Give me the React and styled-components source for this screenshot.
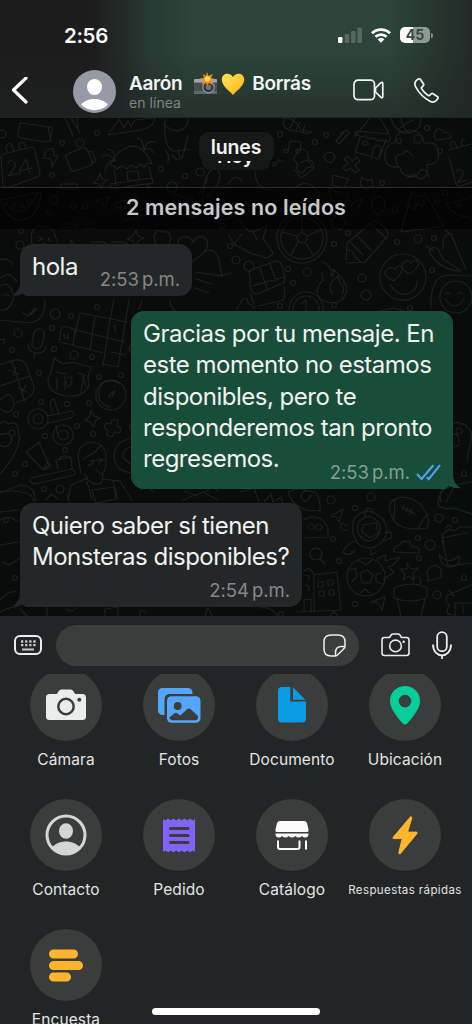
import React from "react";
import styled, { createGlobalStyle } from "styled-components";

const colors = {
  panel: "#222526",
  circle: "#3b3c3c",
  received: "#232728",
  sent: "#174d39",
  white: "#fafafa",
  text: "#f1f2f2",
  muted: "#858888",
  amber: "#ffb52e",
};

const GlobalStyle = createGlobalStyle`
  * {
    box-sizing: border-box;
  }

  body {
    margin: 0;
    background: #0a0b0b;
    font-family: Inter, "Liberation Sans", sans-serif;
    overflow: hidden;
  }

  svg {
    display: block;
    flex: none;
  }
`;

const Screen = styled.div`
  position: relative;
  display: flex;
  flex-direction: column;
  width: 472px;
  height: 1024px;
  overflow: hidden;
  background: ${colors.panel};
`;

const Header = styled.header`
  height: 118px;
  flex: none;
  border-bottom: 1px solid #1d2523;
  background:
    linear-gradient(180deg, transparent 45%, rgba(30, 36, 34, 0.55) 100%),
    linear-gradient(90deg, #1c1c1c 0 94px, #1f2323 102px, #222926 122px, #283a33 150px, #2c4439 190px, #2c4439 390px, #26382f 430px, #222a27 472px);
`;

const StatusBar = styled.div`
  display: flex;
  align-items: center;
  height: 70px;
  padding: 0 39px 0 64px;
`;

const Clock = styled.time`
  flex: 1;
  color: ${colors.white};
  font-size: 20.5px;
  font-weight: 600;
  letter-spacing: -0.35px;
`;

const Indicators = styled.div`
  display: flex;
  align-items: center;
  gap: 9px;
`;

const ContactBar = styled.div`
  display: flex;
  align-items: center;
  height: 44px;
  padding-left: 11px;
`;

const Contact = styled.div`
  flex: 1;
  padding-left: 13px;
`;

const ContactName = styled.h1`
  display: flex;
  align-items: center;
  height: 22px;
  margin: 0;
  padding-bottom: 2px;
  color: ${colors.text};
  font-size: 19px;
  font-weight: 600;
  letter-spacing: -0.35px;
`;

const Emojis = styled.span`
  display: flex;
  align-items: center;
  gap: 3px;
  margin: 0 7px 0 11px;
`;

const Presence = styled.div`
  color: #7c8682;
  font-size: 14px;
  line-height: 16px;
  letter-spacing: 0.05px;
  margin-top: -1px;
`;

const CallActions = styled.div`
  display: flex;
  align-items: center;
  gap: 29px;
  padding: 0 33px 4px 0;
`;

const Chat = styled.main`
  position: relative;
  display: flex;
  flex-direction: column;
  height: 498px;
  flex: none;
  overflow: hidden;
  background: #0a0b0b;
`;

const Wallpaper = styled.svg`
  position: absolute;
  inset: 0;
`;

const DateArea = styled.div`
  position: relative;
  display: flex;
  justify-content: center;
  height: 69px;
  flex: none;
  padding-top: 14px;
`;

const DatePill = styled.div`
  position: relative;
  width: 75px;
  height: 31px;
  border-radius: 10px;
  background: #151918;
  color: ${colors.text};
  font-size: 19.5px;
  font-weight: 600;
  line-height: 31px;
  letter-spacing: -0.1px;
  text-align: center;
`;

const TodayPill = styled.div`
  position: absolute;
  top: 29px;
  left: 2px;
  width: 70px;
  height: 9px;
  padding-bottom: 4px;
  overflow: hidden;
  border-radius: 0 0 9px 9px;
  background: #131716;
  display: flex;
  justify-content: center;
  align-items: flex-end;
  line-height: 20px;
`;

const UnreadBand = styled.div`
  position: relative;
  height: 42px;
  flex: none;
  border-top: 1px solid #292c2c;
  background: rgba(0, 0, 0, 0.58);
  color: #c7c9c9;
  font-size: 21.5px;
  font-weight: 600;
  line-height: 38px;
  text-align: center;
  letter-spacing: 0.12px;
`;

const Messages = styled.div`
  position: relative;
  display: flex;
  flex: none;
  flex-direction: column;
  align-items: flex-start;
  padding: 15px 19px 0 20px;
`;

const Bubble = styled.article`
  position: relative;
  align-self: ${({ $sent }) => ($sent ? "flex-end" : "flex-start")};
  width: ${({ $width }) => $width}px;
  height: ${({ $height }) => $height}px;
  margin-bottom: ${({ $sent }) => ($sent ? 14 : 15)}px;
  padding: 7px 0 0 12px;
  border-radius: 13px;
  background: ${({ $sent }) => ($sent ? colors.sent : colors.received)};
`;

const Line = styled.p`
  margin: 0;
  height: 31.3px;
  color: ${colors.text};
  font-size: 24px;
  line-height: 31.3px;
  letter-spacing: -0.5px;
  white-space: nowrap;
`;

const Meta = styled.span`
  position: absolute;
  right: 12px;
  bottom: 5px;
  display: flex;
  align-items: center;
  gap: 6px;
  color: ${({ $sent }) => ($sent ? "#80a094" : colors.muted)};
  font-size: 18.5px;
  line-height: 24px;
  letter-spacing: -0.05px;
  white-space: nowrap;
  word-spacing: -2px;
`;

const Tail = styled.svg`
  position: absolute;
  bottom: 0;
  ${({ $sent }) => ($sent ? "right: -8px;" : "left: -7px;")}
`;

const InputBar = styled.div`
  display: flex;
  align-items: center;
  height: 58px;
  flex: none;
  padding: 0 20px 0 14px;
`;

const Field = styled.div`
  display: flex;
  align-items: center;
  justify-content: flex-end;
  width: 303px;
  height: 41px;
  margin: 0 22px 0 14px;
  padding-right: 13px;
  border-radius: 21px;
  background: ${colors.circle};
`;

const InputActions = styled.div`
  display: flex;
  align-items: center;
  gap: 22px;
`;

const AttachmentPanel = styled.section`
  display: grid;
  grid-template-columns: repeat(4, 113px);
  grid-auto-rows: 130px;
  flex: 1;
  overflow: hidden;
  padding-left: 9.5px;
  align-content: start;
`;

const Attachment = styled.div`
  display: flex;
  flex-direction: column;
  align-items: center;
  margin-top: -5px;
`;

const IconCircle = styled.div`
  display: flex;
  align-items: center;
  justify-content: center;
  width: 72px;
  height: 72px;
  flex: none;
  border-radius: 50%;
  background: ${colors.circle};
`;

const Label = styled.span`
  margin-top: 9px;
  color: #e3e4e4;
  font-size: ${({ $small }) => ($small ? "11.5px" : "15.5px")};
  line-height: 20px;
  letter-spacing: ${({ $small }) => ($small ? "0.4px" : "0.1px")};
  white-space: nowrap;
`;

const HomeIndicator = styled.div`
  position: absolute;
  left: 152px;
  bottom: 9px;
  width: 168px;
  height: 7px;
  border-radius: 4px;
  background: #fff;
`;

const SignalIcon = () => (
  <svg width="24" height="16" viewBox="0 0 24 16">
    <rect x="0" y="10" width="4.5" height="6" rx="1.2" fill="#fff" />
    <g fill="#57695f">
      <rect x="6.7" y="7" width="4.5" height="9" rx="1.2" />
      <rect x="13.1" y="4" width="4.5" height="12" rx="1.2" />
      <rect x="19.4" y="0.5" width="4.5" height="15.5" rx="1.2" />
    </g>
  </svg>
);

const WifiIcon = () => (
  <svg width="20" height="15" viewBox="0 0 20 15">
    <g fill="none" stroke="#fff" strokeWidth="2.7">
      <path d="M1 5.2C6 .3 14 .3 19 5.2" />
      <path d="M4.4 8.8c3.2-3 8-3 11.2 0" />
    </g>
    <path d="M6.6 11.2c2-1.7 4.8-1.7 6.8 0L10 14.8z" fill="#fff" />
  </svg>
);

const BatteryShell = styled.div`
  display: flex;
  align-items: center;

  &::after {
    content: "";
    width: 2px;
    height: 5px;
    margin-left: 1px;
    border-radius: 0 2px 2px 0;
    background: #84918b;
  }
`;

const BatteryLevel = styled.div`
  width: 30px;
  height: 16px;
  border-radius: 5px;
  background: linear-gradient(90deg, #fff 45%, #8f9a94 45%);
  color: #344a40;
  font-size: 14px;
  font-weight: 700;
  line-height: 16.5px;
  text-align: center;
`;

const BackIcon = () => (
  <svg width="18" height="30" viewBox="0 0 18 30">
    <path d="M15 1 2.500 13 15 25" fill="none" stroke="#fff" strokeWidth="3.200" strokeLinecap="round" strokeLinejoin="round" />
  </svg>
);

const AvatarIcon = styled.svg`
  margin: -2px 0 0 44px;
`;

const CameraEmoji = () => (
  <svg width="25" height="24" viewBox="0 0 25 24">
    <path d="M1 8q0-1 1-1h3l1-1h5l1 1h11q1 0 1 1v13q0 1-1 1H2q-1 0-1-1z" fill="#4b4e50" />
    <path d="M1 8q0-1 1-1h21q1 0 1 1v2.5H1z" fill="#a1a6a7" />
    <path d="M1 19h23v2q0 1-1 1H2q-1 0-1-1z" fill="#636768" />
    <circle cx="15.5" cy="15.2" r="6.2" fill="#92979a" />
    <circle cx="15.5" cy="15.2" r="5" fill="#303437" />
    <circle cx="15.5" cy="15.2" r="2.8" fill="#65727c" />
    <path d="m14 0 1.5 4L20 2l-2 4 4 1-3.6 2 1.6 4-4-2-2 3-1-3.5L8.5 12l2-3.7L7 6.5 11 6 10 2l3 2z" fill="#f58b20" />
    <circle cx="14.5" cy="7" r="2.7" fill="#ffe14d" />
  </svg>
);

const HeartEmoji = () => (
  <svg width="24" height="24" viewBox="0 0 24 24">
    <defs>
      <linearGradient id="heart" x1="0" y1="0" x2="1" y2="1">
        <stop offset="0" stopColor="#ffe35d" />
        <stop offset=".65" stopColor="#fdc52f" />
        <stop offset="1" stopColor="#e99c16" />
      </linearGradient>
    </defs>
    <path d="M12 5.3C9.9.3 1 .3.8 7.6c0 6.4 7.2 11 11.2 15.4C16 18.6 23.2 14 23.2 7.6 23 .3 14.1.3 12 5.3z" fill="url(#heart)" />
  </svg>
);

const VideoIcon = () => (
  <svg width="32" height="22" viewBox="0 0 32 22" fill="none" stroke="#f2f3f3" strokeWidth="1.7" strokeLinejoin="round">
    <rect x="1" y="1.2" width="20.5" height="19.5" rx="4" />
    <path d="m22.5 9 5.300-5.200q2-1.300 2 .6v13.200q0 1.900-2 .6L22.5 13z" />
  </svg>
);

const PhoneIcon = () => (
  <svg width="25" height="25" viewBox="0 0 25 25" fill="none" stroke="#f2f3f3" strokeWidth="1.7" strokeLinejoin="round">
    <path d="M2.7 2.1 4.4 1c.8-.5 1.6-.2 2.1.5l2.9 4.3c.5.8.3 1.5-.3 2.1L7.7 9.4c-.4.4-.4.9-.1 1.4 1.7 2.7 3.900 5 6.600 6.600.5.3 1 .3 1.400-.1l1.500-1.400c.6-.6 1.300-.7 2-.2l4.200 2.800c.8.5.9 1.300.5 2l-1.300 1.800c-1.400 1.700-4 2.200-6.500.9C10 20.200 5 15.100 1.800 9.200.4 6.500.7 3.700 2.700 2.100z" />
  </svg>
);

const CheckIcon = () => (
  <svg width="25" height="17" viewBox="0 0 25 17" fill="none" stroke="#4ea3f5" strokeWidth="2.1">
    <path d="m1 10 4.600 5L17.300 1.200M10.800 13.200l1.900 1.900L24 1.200" />
  </svg>
);

const KeyboardIcon = () => (
  <svg width="28" height="20" viewBox="0 0 28 20">
    <rect x="1" y="1" width="26" height="18" rx="5" fill="none" stroke="#eceeee" strokeWidth="2" />
    <g stroke="#c9caca" strokeWidth="2.3" strokeDasharray="2.3 1.8">
      <path d="M7 6.500h15M7 10.200h15" />
    </g>
    <path d="M8 14.500h12" stroke="#c9caca" strokeWidth="2" />
  </svg>
);

const StickerIcon = () => (
  <svg width="23" height="23" viewBox="0 0 23 23" fill="none" stroke="#eceeee" strokeWidth="1.5" strokeLinejoin="round">
    <path d="M12.500 22H8q-7 0-7-7V8q0-7 7-7h7q7 0 7 7v4.500q0 1-1.500 2.500L15 20.500q-1.500 1.500-2.500 1.500z" />
    <path d="M12.500 22v-3.500q0-6 6-6H22" />
  </svg>
);

const CameraOutline = () => (
  <svg width="29" height="24" viewBox="0 0 29 24" fill="none" stroke="#eceeee" strokeWidth="1.6" strokeLinejoin="round">
    <path d="M3.500 4.500h5l1.700-2.600q.6-.9 1.600-.9h5.400q1 0 1.600.9l1.700 2.600h5q2.500 0 2.500 2.500v13q0 2.500-2.500 2.500h-22Q1 22.500 1 20V7q0-2.500 2.500-2.500z" />
    <circle cx="14.5" cy="12.9" r="5.8" />
    <circle cx="22.7" cy="8.8" r="1.3" fill="#eceeee" stroke="none" />
  </svg>
);

const MicIcon = () => (
  <svg width="20" height="29" viewBox="0 0 20 29" fill="none" stroke="#eceeee" strokeWidth="1.8">
    <rect x="5.2" y="1.2" width="9.6" height="19" rx="4.8" />
    <path d="M1 13.500c0 14.500 18 14.500 18 0M10 24.200V28" />
  </svg>
);

const CameraSolid = () => (
  <svg width="40" height="32" viewBox="0 0 40 32">
    <path d="M3.500 5h7.300l2-3q.9-1.500 2.600-1.500h9.200q1.700 0 2.600 1.500l2 3h7.300Q40 5 40 8.500v19q0 3.500-3.500 3.500h-33Q0 31 0 27.500v-19Q0 5 3.500 5z" fill="#ebecec" />
    <circle cx="20" cy="17.5" r="7.7" fill="none" stroke={colors.circle} strokeWidth="2.5" />
    <circle cx="33.3" cy="10.8" r="2" fill={colors.circle} />
  </svg>
);

const PhotosIcon = () => (
  <svg width="43" height="35" viewBox="0 0 43 35">
    <rect width="34.5" height="27" rx="4.5" fill="#53a6fb" />
    <rect x="6.5" y="6" width="36.5" height="30" rx="5" fill={colors.circle} />
    <rect x="9" y="8.3" width="33.5" height="26.5" rx="4.5" fill="#53a6fb" />
    <circle cx="19.7" cy="18" r="3.9" fill={colors.circle} />
    <path d="m11.500 29.200 5-4q1.400-1 2.700 0l3 2.300 7-6.300q1.800-1.500 3.500.1l7.300 6.700v1.500q0 2.800-3 2.800H14.500q-2.600 0-3-3.100z" fill={colors.circle} />
  </svg>
);

const DocumentIcon = () => (
  <svg width="28" height="36" viewBox="0 0 28 36" fill="#0b9be3">
    <path d="M4 0h8.300v14.500H28V31.500q0 4-4 4H4q-4 0-4-4V4q0-4 4-4z" />
    <path d="m15 .3 12.400 12.400H15z" />
  </svg>
);

const PinIcon = () => (
  <svg width="30" height="39" viewBox="0 0 30 39">
    <path d="M15 0c8.300 0 15 6.500 15 15 0 7.300-6.600 15.500-12.600 22.300q-2.400 2.500-4.800 0C6.600 30.500 0 22.300 0 15 0 6.500 6.700 0 15 0zm0 8.800a6.300 6.300 0 1 0 0 12.600 6.300 6.300 0 0 0 0-12.600z" fill="#08ce9b" />
  </svg>
);

const PersonIcon = () => (
  <svg width="42" height="42" viewBox="0 0 42 42">
    <circle cx="21" cy="21" r="19" fill="none" stroke="#d4d5d6" strokeWidth="3" />
    <ellipse cx="21" cy="17" rx="7" ry="7.7" fill="#d4d5d6" />
    <path d="M7 33.500c6.500-8 21.500-8 28 0C28 42.500 14 42.500 7 33.500z" fill="#d4d5d6" />
  </svg>
);

const OrderIcon = () => (
  <svg width="32" height="35" viewBox="0 0 32 35">
    <path d="M0 1l2.500 1.500L5 .5l2.700 2L10.500.5l2.700 2L16 .5l2.700 2 2.800-2 2.700 2L27 .5l2.500 2L32 1v33l-2.500-1.500-2.500 2-2.800-2-2.700 2-2.800-2-2.700 2-2.800-2-2.700 2-2.800-2-2.700 2-2.500-2L0 34z" fill="#8064fa" />
    <path d="M7.500 10.500h17.500M7.500 17.500h17.500M7.500 24.500h17.500" stroke={colors.circle} strokeWidth="3.2" strokeLinecap="round" />
  </svg>
);

const StoreIcon = () => (
  <svg width="34" height="29" viewBox="0 0 34 29" fill="#fbfbfb">
    <path d="M5 0h24q2.300 0 3 2l1.600 7q.4 2-1.600 2H2Q0 11 .4 9L2 2q.7-2 3-2z" />
    <path d="M.5 12.500h33q0 4-3.200 4-2 0-3.300-1.500-1.300 1.500-3.300 1.500t-3.400-1.500q-1.300 1.500-3.300 1.500T13.700 15q-1.400 1.500-3.400 1.500T7 15q-1.300 1.500-3.300 1.500-3.200 0-3.200-4z" />
    <path d="M3 19.500V26q0 2 2 2h17.500q2 0 2-2v-6.500M31 19.500V28.500" fill="none" stroke="#fbfbfb" strokeWidth="2" />
  </svg>
);

const BoltIcon = () => (
  <svg width="26" height="39" viewBox="0 0 26 39">
    <path d="M18.500.8 1.200 21.300q-.8 1.300.7 1.300h8.300L6.800 36.800q0 1.500 1.400 1L25 17.500q.7-1.400-.8-1.400h-8.700L19.800 2.400Q20 .2 18.500.8z" fill={colors.amber} stroke={colors.amber} />
  </svg>
);

const PollIcon = () => (
  <svg width="34" height="33" viewBox="0 0 34 33" stroke={colors.amber} strokeWidth="9" strokeLinecap="round">
    <path d="M4.500 5h20M4.500 16.500h25M4.500 28h13" />
  </svg>
);

const attachments = [
  { label: "Cámara", icon: <CameraSolid /> },
  { label: "Fotos", icon: <PhotosIcon /> },
  { label: "Documento", icon: <DocumentIcon /> },
  { label: "Ubicación", icon: <PinIcon /> },
  { label: "Contacto", icon: <PersonIcon /> },
  { label: "Pedido", icon: <OrderIcon /> },
  { label: "Catálogo", icon: <StoreIcon /> },
  { label: "Respuestas rápidas", icon: <BoltIcon />, small: true },
  { label: "Encuesta", icon: <PollIcon /> },
];

// [x, y, radius] of the loose bubbles between the doodles
const dots = [
  [2, 134, 4], [62, 143, 2.5], [80, 143, 4], [97, 133, 2.5], [52, 175, 2.5], [161, 169, 2.5], [172, 187, 5],
  [200, 172, 4], [185, 176, 2.5], [53, 200, 4], [73, 206, 2.5], [85, 206, 2.5], [49, 213, 2.2], [21, 231, 2.5],
  [20, 245, 4], [222, 226, 2.5], [230, 246, 2.5], [236, 260, 4], [280, 134, 2.5], [315, 142, 2.5], [326, 135, 2.5],
  [399, 141, 2.5], [418, 139, 4], [427, 128, 2.5], [440, 151, 2.5], [382, 183, 2.5], [445, 193, 2.5],
  [437, 202, 2.2], [395, 210, 2.5], [348, 233, 2.5], [334, 244, 2.5], [397, 242, 2.5], [418, 239, 4], [434, 238, 2.5],
  [249, 266, 5], [288, 269, 2.5], [307, 272, 4], [293, 283, 2.5], [362, 278, 4], [366, 295, 5], [334, 305, 2.5],
  [432, 270, 2.5], [280, 306, 2.5], [410, 308, 2.5], [97, 307, 2.5], [55, 314, 5], [71, 316, 2.5], [18, 333, 4],
  [52, 328, 2.5], [12, 350, 2.5], [54, 349, 2.5], [74, 355, 4], [92, 357, 2.5], [39, 373, 2.5], [99, 377, 2.5],
  [121, 375, 2.5], [41, 402, 2.5], [67, 404, 2.5], [89, 403, 2.5], [16, 414, 2.5], [77, 426, 2.5], [45, 436, 2.5],
  [93, 434, 2.5], [65, 450, 2.5], [25, 464, 2.5], [15, 474, 2.5], [60, 489, 4], [44, 489, 2.5], [331, 500, 4],
  [371, 497, 4], [355, 508, 2.5], [333, 539, 2.5], [339, 561, 2.5], [418, 538, 2.5], [439, 518, 4], [455, 520, 2.5],
  [430, 545, 5], [419, 558, 2.5], [417, 581, 4], [437, 595, 4], [464, 578, 2.5], [355, 604, 2.5], [464, 474, 2.5],
  [6, 520, 2.5], [15, 578, 2.5], [281, 614, 2.5],
];

const doodles = [
  // speech bar, calendar, bolt, video
  "M20 123l30 4q3 0 2 4l-2 9q-1 2-4 2l-25-4q-4 0-3-4zM48 127l3 14M27 132h.1M34 133h.1M41 134h.1",
  "M3 154l29-7q2 0 3 4l5 22q0 3-3 4l-30 11q-3 0-4-4L1 157q0-2 2-3zM8 151q-4-3-1-6t5 0l2 6M20 149q-3-4 0-6t5 1l1 5",
  "M8 163q4-5 7 0 2 4-7 13l12-3M30 174l-4-15-7 12 13-3",
  "M46 150l7-2 1 8 4 0-6 11-1-8-7-1z",
  "M68 154l14-6q4-1 6 3l4 10q1 4-3 5l-14 5q-4 1-5-3l-4-10q-1-3 2-4zM88 152l4-1 4 10-3 2",
  // beach hut
  "M110 166q5-14 18-19 14-5 24 17l-4-1-4 4-4-3-4 4-5-3-4 4-5-3-5 3-3-3zM114 170l2 15M149 167l3 12M127 172l11-1 1 9-11 1zM110 184l42-6 1 5-42 6zM116 189l-1 3M148 184l1 5",
  "M115 161q-6-9-13-5M115 161q0-12-8-12M115 161q-6-3-10 10M144 150q2-10 11-8M144 150q-1-12-7-12M144 150q5-4 10 3",
  "M100 173l2 6 6 1-5 3-1 6-3-5-6-1 5-4zM62 184h14q4 2 0 5H62q-4-2 0-5",
  // watermelon, cursor, bone
  "M1 200l40-8q-2 27-20 28-14 0-20-20zM5 202q18 22 32-8M12 204q3-4 4 1t-4-1zM20 207q0-5 3-2t-3 2zM27 203q2-6 4-2t-4 2z",
  "M95 201l14-4-5 13-2-7zM118 202l18-4q4 3-1 6l-18 4q-4-3 1-6M124 220l14-2M62 224h15q2 2 0 3H62M83 224h12q2 3 0 4H83",
  "M115 210q14-3 24 0l18-2q4 4 0 7l-22 1M173 194l7 2 5 2",
  // pizza slice, bird
  "M108 135l11-16 5 9 4-7 3 6 4-7 20-2q-2 10-14 12zM65 118l8 18M71 118l9 15M77 118l1 10",
  "M165 120q-2 30 10 31l15-2M164 125l8 5q15 3 16-11M188 135l-6 24M165 150q5 4 3 12M172 155q8 9 8 2l-2-6",
  "M203 195q0-16 8-25 6-5 9 5 0 10-13 22M228 184q9-12 14-2M250 165l8-14M188 198l12 4M198 195l10-16",
  // ice cream, smiley, socks
  "M32 244q-3-18 9-18 14 1 14 11 5 7 3 11M39 237l3 2-3 2M50 238l-2 2 3 2M42 244q3-2 5 1",
  "M0 260q9-3 13 5M0 278l9-4 9 8M0 286q10-6 14 11-4 15-14 13M3 296q5-3 6 0",
  "M71 240l4 7 5 2-5 5-1 5-5-6-6-1 6-4zM136 230l2 6 6 2-6 3-2 6-3-6-6-2 6-3zM91 242h13l3 2M111 242h13q3 1 4 4",
  // heart cake
  "M154 236l3-6 6 2 6 0 2 7-3 7-12-1zM180 252q-6-13 4-15 7-1 9 5 5-8 12-4 7 7-4 17l-12 9zM205 252q10-6 14 8l3 16-20-3M195 272l26 4 10-3M196 279l15 5M195 288l14 5",
  "M229 236l6 10M225 220l11-5M190 205l8 3q-2 10-9 10zM186 216q14 4 13-9",
  // shell, notes, home
  "M284 118q12 0 17 12l11 2-5 2-6-2-5-1q-16-1-12-13M295 118l-5 10M300 122l-4 8M305 125l-2 7",
  "M288 152l2-11 11 1-1 10q-4 2-4-1t4-1M288 152q-4 2-4-1t4-1M276 165l3-5 4 2M276 165q-3 2-3-1t3-1",
  "M356 135l14-17M380 118q6 10 9 16l-33-3-1 5 3-1 3 2 4-1 4 3 4-1 5 3 4-1 5 2 3-1v-5M360 138l-5 14 24 7 7-20M372 155l2-8q5-4 7 2l-2 8M368 144q0-3-3-3t-2 3 5 0",
  "M391 118q4 15 16 15 14-1 14-15M401 118q0 8 8 15M413 120q-9 4-14 9M435 131q5-5 8 1 8 0 8 6l-14 2q-4-1-2-9",
  // flower, cross, tools
  "M297 154q0-6 6-5 7 2 5 10 8 3 5 10l-4 3M297 154q-7 5 1 10-4 8 5 9l3-5 6-1-4-7-8 3",
  "M324 156l4-4 5 1 2 5-4 5-5-2zM308 173l-7 5-6-8",
  "M344 159l4-3 4 5 5-4 3 4-5 4 4 5-4 3-4-5-5 3-3-3 5-5zM340 134l6-4 3 3-10 11-3-3 8-9",
  "M255 172q1 18 16 18l22 0q14-16 28 6M333 175l15 4-4 9-12-3zM328 188l20 8-4 9-13-5zM362 177l6 4 4-2 1 7-7 4-6-5z",
  // tree, party hat, calendar
  "M415 176q-14 2-15-9-17 1-15-13 0-9 10-12 0-11 15-12 14 2 14 14 13-4 14 7 3 13-11 14 2 13-8 14l-5-5-7 4zM398 166q-6-12 5-12 3-7 10 2M417 175q7-12 12 2",
  "M412 191l-11 41M424 192l20 34-42 6M413 195l11 2v8l-4 1-2-4-4 8-5-3M449 150l22-6M449 157l7 27q1 3 4 2l12-4M452 148q-4-7 2-6l3 5M462 145q-2-6 3-5",
  "M456 172q4-6 7 0 1 4-6 11l10-3M447 204l25-7M447 204q3 11 24 14M456 206q3-5 5 0z",
  // ferris wheel
  "M302 213a25 25 0 1 1-.1 0zM302 217a21 21 0 1 1-.1 0zM302 233a5 5 0 1 1-.1 0zM302 217v16M307 236l15-7M305 242l8 13M298 242l-7 13M297 236l-15-4",
  "M240 220q3 10 13 12l4 8M253 232l14-6-4 12 10 15q-5 8-12 3l-9-2-18-10 8-10M352 204l10-6-4 11M372 199l8-3q7 4 4 14l-6 5q-7-5-6-16M331 220l8-6 7 8-5 8-8-3z",
  // pencil, fire, gift
  "M346 260l1-17 24-20q5-4 11 2 8 7 5 12l-22 25-19 1M350 242l13 13M357 236l14 14M371 224l14 13M347 250q6-1 7 6l6 5",
  "M322 262q11 3 9 14 4 0 2-7 13 11 14 21-4 17-23 11-13-8-1-21l-1-7M333 294q-8-9 5-18l2 7q6 4 2 11",
  "M250 276q-3-5 4-7l22-8q5 0 6 5l3 12q0 5-4 6l-24 10q-5 0-6-5l-1-3zM252 286l32-9M260 269l8 22M270 264l6 17M250 293l4 11M284 287l1 9q-1 4-4 5l-23 5",
  // heart eyes face
  "M403 254a23 23 0 1 1-.1 0zM394 281q-13-6-7-12 5-3 8 1 4-7 7-2 1 4-8 13zM410 274q-12-6-6-12 5-3 7 1 4-5 7-1 3 4-8 12zM390 284q8 14 20 9 8-4 7-13",
  "M429 252q2-7 9-3l5 10 18 12q-16 0-27-12-2-3-5-7M443 249q-1-16 8-15l9 22 6 13M426 246l7 5M449 233l-4-3M431 308q-1-32 17-33l24 1M456 281a16 16 0 1 1-.1 0M445 294q3-3 5 0M458 294q3-3 5 0M445 299q10 14 19 0",
  "M306 292a17 17 0 1 0 .1 0zM306 296a13 13 0 1 0 .1 0zM302 303l4-3v12M236 310l7-11q5-2 5 4l7 5M380 311l14-3 10 3",
  // crossword
  "M80 313l47 9M75 330l50 12M60 342l43 11M80 313l-5 22M95 316l-5 34M110 320l-7 46M129 300l-11 67-16-3M114 300l-5 24M111 352l14 3M62 326l13 3-2 16M62 326l-3 15M65 335q-3-2 0 3 4 1 3-4v5M115 325v7M0 320l30 3q16-3 15-23M23 313l5 3 7-8M30 315l7-6",
  // mic, tic-tac-toe
  "M34 333q2-5 7-4 4 2 3 7l-2 9q-2 5-7 3-4-1-3-5zM28 344q0 8 8 9 9 1 10-7M35 353l-1 6M0 340q8-3 3 4M0 365l11-4q13-4 16 6l7 20q0 8-8 12l-10 4M12 362l13 40M0 386l30-10M8 370l11 4M16 367l-3 9M19 388l8 4M26 385l-5 9M0 400q12-12 14 4-3 13-14 5",
  // cat, gauge
  "M54 358l9 6q10-3 19 1l10 2q-6 8-3 18-5 13-23 11-19-3-18-17 4-8 6-21zM56 372l10 2M57 378v12M65 376v14M68 378q6-4 3 5t-5-2M78 373l6 2-3 17M83 376l3 11",
  "M111 380a15 15 0 1 1-.1 0zM120 384q-15-9-21 6-2 14 11 17M109 397q0-3 6-6l-3 6z",
  // spinner, stars
  "M38 409a10 10 0 1 0 .1 0zM38 414a5 5 0 1 0 .1 0zM63 425a10 10 0 1 0 .1 0zM63 430a5 5 0 1 0 .1 0zM47 416l25-5q4 5-1 7l-23 5M52 411q-4-12 2-12l5 16M56 425l1 8M91 410l3 6 6 2-5 3-1 6-4-5-5-2 5-4zM112 420l6 0-1 6 4 2-1 5-6-1-2 5-5-2 1-5-4-2 2-5 5 1z",
  // cream tube, toothbrush, girl
  "M26 452l13-10 10 23-6 5zM44 467l4-5 3 5-5 2zM0 424q5-5 8 0 11-4 10 8 6 14-18 42M0 435q10-5 12 5-4 10-12 5M12 430a3 3 0 1 0 .1 0M30 478l42-9q5 3 2 6l-39 9q-6-1-5-6M58 470l-2-10 15-3 1 11M58 460q5-7 12-2",
  "M81 473l-3-16q0-14 16-15 11 3 12 13v10q-2 10-6 9l-4-5M83 459l12-7 5-6M90 461l16-2M88 465q5 1 6-5M99 463l3-3M85 474l3 6q9 7 14 2l1-8M68 499l3-14 17-7M102 479l18 2 12 19M87 482l5 17M113 481l5 18M0 493l20-8q16 1 15 16M46 500l5-6 7 5",
  "M131 438q-17 4-17 18t17 17M131 447q-9 2-8 11l8 6M142 300q-2 9-4 9M170 300q0 9 8 12M140 490l6-4 8 6M184 491l13 5M131 345q-4 4 0 8M132 423q-5 3 0 8",
  // avocado, ghost, cursor
  "M240 492l14-4 5 14M264 502l7-8 2 8 8-5 2 7M288 492q6-4 13-3l15 4q5 7 4 18l-14-1q-15-5-18-18M310 491q-9-1-9 6 5 9 10-2M303 520q17-9 25 8v9l-24 1M311 524a3 3 0 1 0 .1 0M319 524a3 3 0 1 0 .1 0M331 516l12-7-4 13-3-5z",
  // turtle, football
  "M354 519q10-12 22-5 14 8 10 22-10 17-25 10-12-10-7-27zM359 522q8-9 16-3 8 7 4 15-8 11-16 5-9-8-4-17zM363 525l13-2 2 10-8 5-8-6zM365 516q1-12 7-6l1 3M385 533q9-3 6 5l-7 3M355 541q-8 2-12 11 5 6 12-2M371 550q-3 8 5 2M347 526q-9-7-5 4l6 0",
  "M390 503q12-12 30 1 12 14 7 24-17 3-29-3-10-9-8-22zM395 500l-1 20M427 514l-8 13M402 507l13 7M404 505l-2 5M408 507l-2 5M412 509l-2 5",
  // magnifier, cloud, soccer ball
  "M316 548a6 6 0 1 1-.1 0zM320 559l5 5M394 552q-1-7 6-7 2-5 8-3 3-1 4 5 9-1 7 6z",
  "M366 558a19 19 0 1 1-.1 0zM360 573l7-3 6 5-3 8h-8zM358 560l8 5 6-5M350 570l5-2 2 8-5 6M381 573l-5 1 0 8 6 2M360 593l5-4 5 4M377 559l9-4-1 6 15-4-7 8-5 2 6 5-10 7",
  "M407 563l4 6 7-1-5 5 1 7-5-4-6 4 2-6-5-5 7 0zM427 571l3-4 6-2 5 4 0 8-5 2-8 2z",
  // buildings, pot
  "M304 571l5-3 5 6v38M314 575l23-3 4 38-45 2M304 612v-12l7-1v12M318 582h5v5h-5zM328 580h5v5h-5zM319 591h5v5h-5zM329 590h5v5h-5zM305 575l4 1v5M305 585l4 1v5M371 602l14-5-3 13-4-7zM394 588q18-8 33 0v10q-17 6-33 0zM397 599l4 17M425 599l-4 17M330 616l4-5 4 5",
  // paw, taco, fruit, gingerbread house
  "M452 425q5-5 8-1 7-1 7 4 7 3 3 17l-3 16M453 435q5-3 6 5t-5 6M459 428a3 3 0 1 0 .1 0M438 505q0-15 14-20l20-3M438 505q5 5 15 3l19 6M441 502q-4-15 9-14M455 485q-4 8-9 17M444 543l-2-8 7-6 5 2 6-4 12 0M442 540l6 26 24-3M441 538l26-5M439 554q8 12 20 2 2 9-7 11-11 1-13-13M446 528q2-6 6 0M449 590l5 6M450 605q-7-4-2-10l23-10M449 606q-5 8 3 9M455 603h16M455 603v14M463 605v8",
  // lower edge
  "M0 492q18-3 31 3l4 8M0 512l19-2M0 520l10-3 9 5M0 545l19-3M2 562q8 6 17-4M0 600l8-7 8-2M0 612q14-7 16-4M20 609l7 7M47 607v9M66 609q6 5 10-1M105 616v-7l13-2v9M140 616q-1-8 6-4M205 616l3-9 4 9M67 495l3 8M92 490l22-3 2 12-20 4zM183 500l20-8 15 8M205 493q7-9 13-2M260 608q12-2 17 8",
];

const DoodleWallpaper = () => (
  <Wallpaper width="472" height="498" viewBox="0 118 472 498" fill="none" stroke="#1e2020" strokeWidth="1.2" strokeLinecap="round" strokeLinejoin="round">
    {doodles.map((d) => (
      <path key={d} d={d} />
    ))}
    {dots.map(([x, y, r]) => (
      <circle key={`${x}-${y}`} cx={x} cy={y} r={r} />
    ))}
  </Wallpaper>
);

function Message({ lines, time, width, height, sent }) {
  return (
    <Bubble $sent={sent} $width={width} $height={height}>
      <Tail $sent={sent} width="22" height="22" viewBox="0 0 22 22" fill={sent ? colors.sent : colors.received}>
        <path d={sent ? "M14 0v9q1 8 7.500 12-5 1-12-2L6 22H0V8z" : "M7 0v10Q6 17 0 21q4 2 9-1.500l4 2.500h9V8z"} />
      </Tail>
      {lines.map((line) => (
        <Line key={line}>{line}</Line>
      ))}
      <Meta $sent={sent}>
        {time}
        {sent && <CheckIcon />}
      </Meta>
    </Bubble>
  );
}

function App() {
  return (
    <Screen>
      <GlobalStyle />
      <Header>
        <StatusBar>
          <Clock>2:56</Clock>
          <Indicators>
            <SignalIcon />
            <WifiIcon />
            <BatteryShell><BatteryLevel>45</BatteryLevel></BatteryShell>
          </Indicators>
        </StatusBar>
        <ContactBar>
          <BackIcon />
          <AvatarIcon width="43" height="43" viewBox="0 0 43 43">
            <circle cx="21.5" cy="21.5" r="21.5" fill="#969aa7" />
            <ellipse cx="21.5" cy="17" rx="7.5" ry="8" fill="#fff" />
            <path d="M8 34.500c6-7.500 21-7.500 27 0-7 7.500-20 7.500-27 0z" fill="#fff" />
          </AvatarIcon>
          <Contact>
            <ContactName>
              Aarón
              <Emojis><CameraEmoji /><HeartEmoji /></Emojis>
              Borrás
            </ContactName>
            <Presence>en línea</Presence>
          </Contact>
          <CallActions>
            <VideoIcon />
            <PhoneIcon />
          </CallActions>
        </ContactBar>
      </Header>

      <Chat>
        <DoodleWallpaper />
        <DateArea>
          <DatePill>
            <TodayPill>Hoy</TodayPill>
            lunes
          </DatePill>
        </DateArea>
        <UnreadBand>2 mensajes no leídos</UnreadBand>
        <Messages>
          <Message width={172} height={52} time="2:53 p.m." lines={["hola"]} />
          <Message
            sent
            width={322}
            height={178}
            time="2:53 p.m."
            lines={[
              "Gracias por tu mensaje. En",
              "este momento no estamos",
              "disponibles, pero te",
              "responderemos tan pronto",
              "regresemos.",
            ]}
          />
          <Message
            width={282}
            height={104}
            time="2:54 p.m."
            lines={["Quiero saber sí tienen", "Monsteras disponibles?"]}
          />
        </Messages>
      </Chat>

      <InputBar>
        <KeyboardIcon />
        <Field><StickerIcon /></Field>
        <InputActions>
          <CameraOutline />
          <MicIcon />
        </InputActions>
      </InputBar>
      <AttachmentPanel>
        {attachments.map((item) => (
          <Attachment key={item.label}>
            <IconCircle>{item.icon}</IconCircle>
            <Label $small={item.small}>{item.label}</Label>
          </Attachment>
        ))}
      </AttachmentPanel>
      <HomeIndicator />
    </Screen>
  );
}

export default App;
